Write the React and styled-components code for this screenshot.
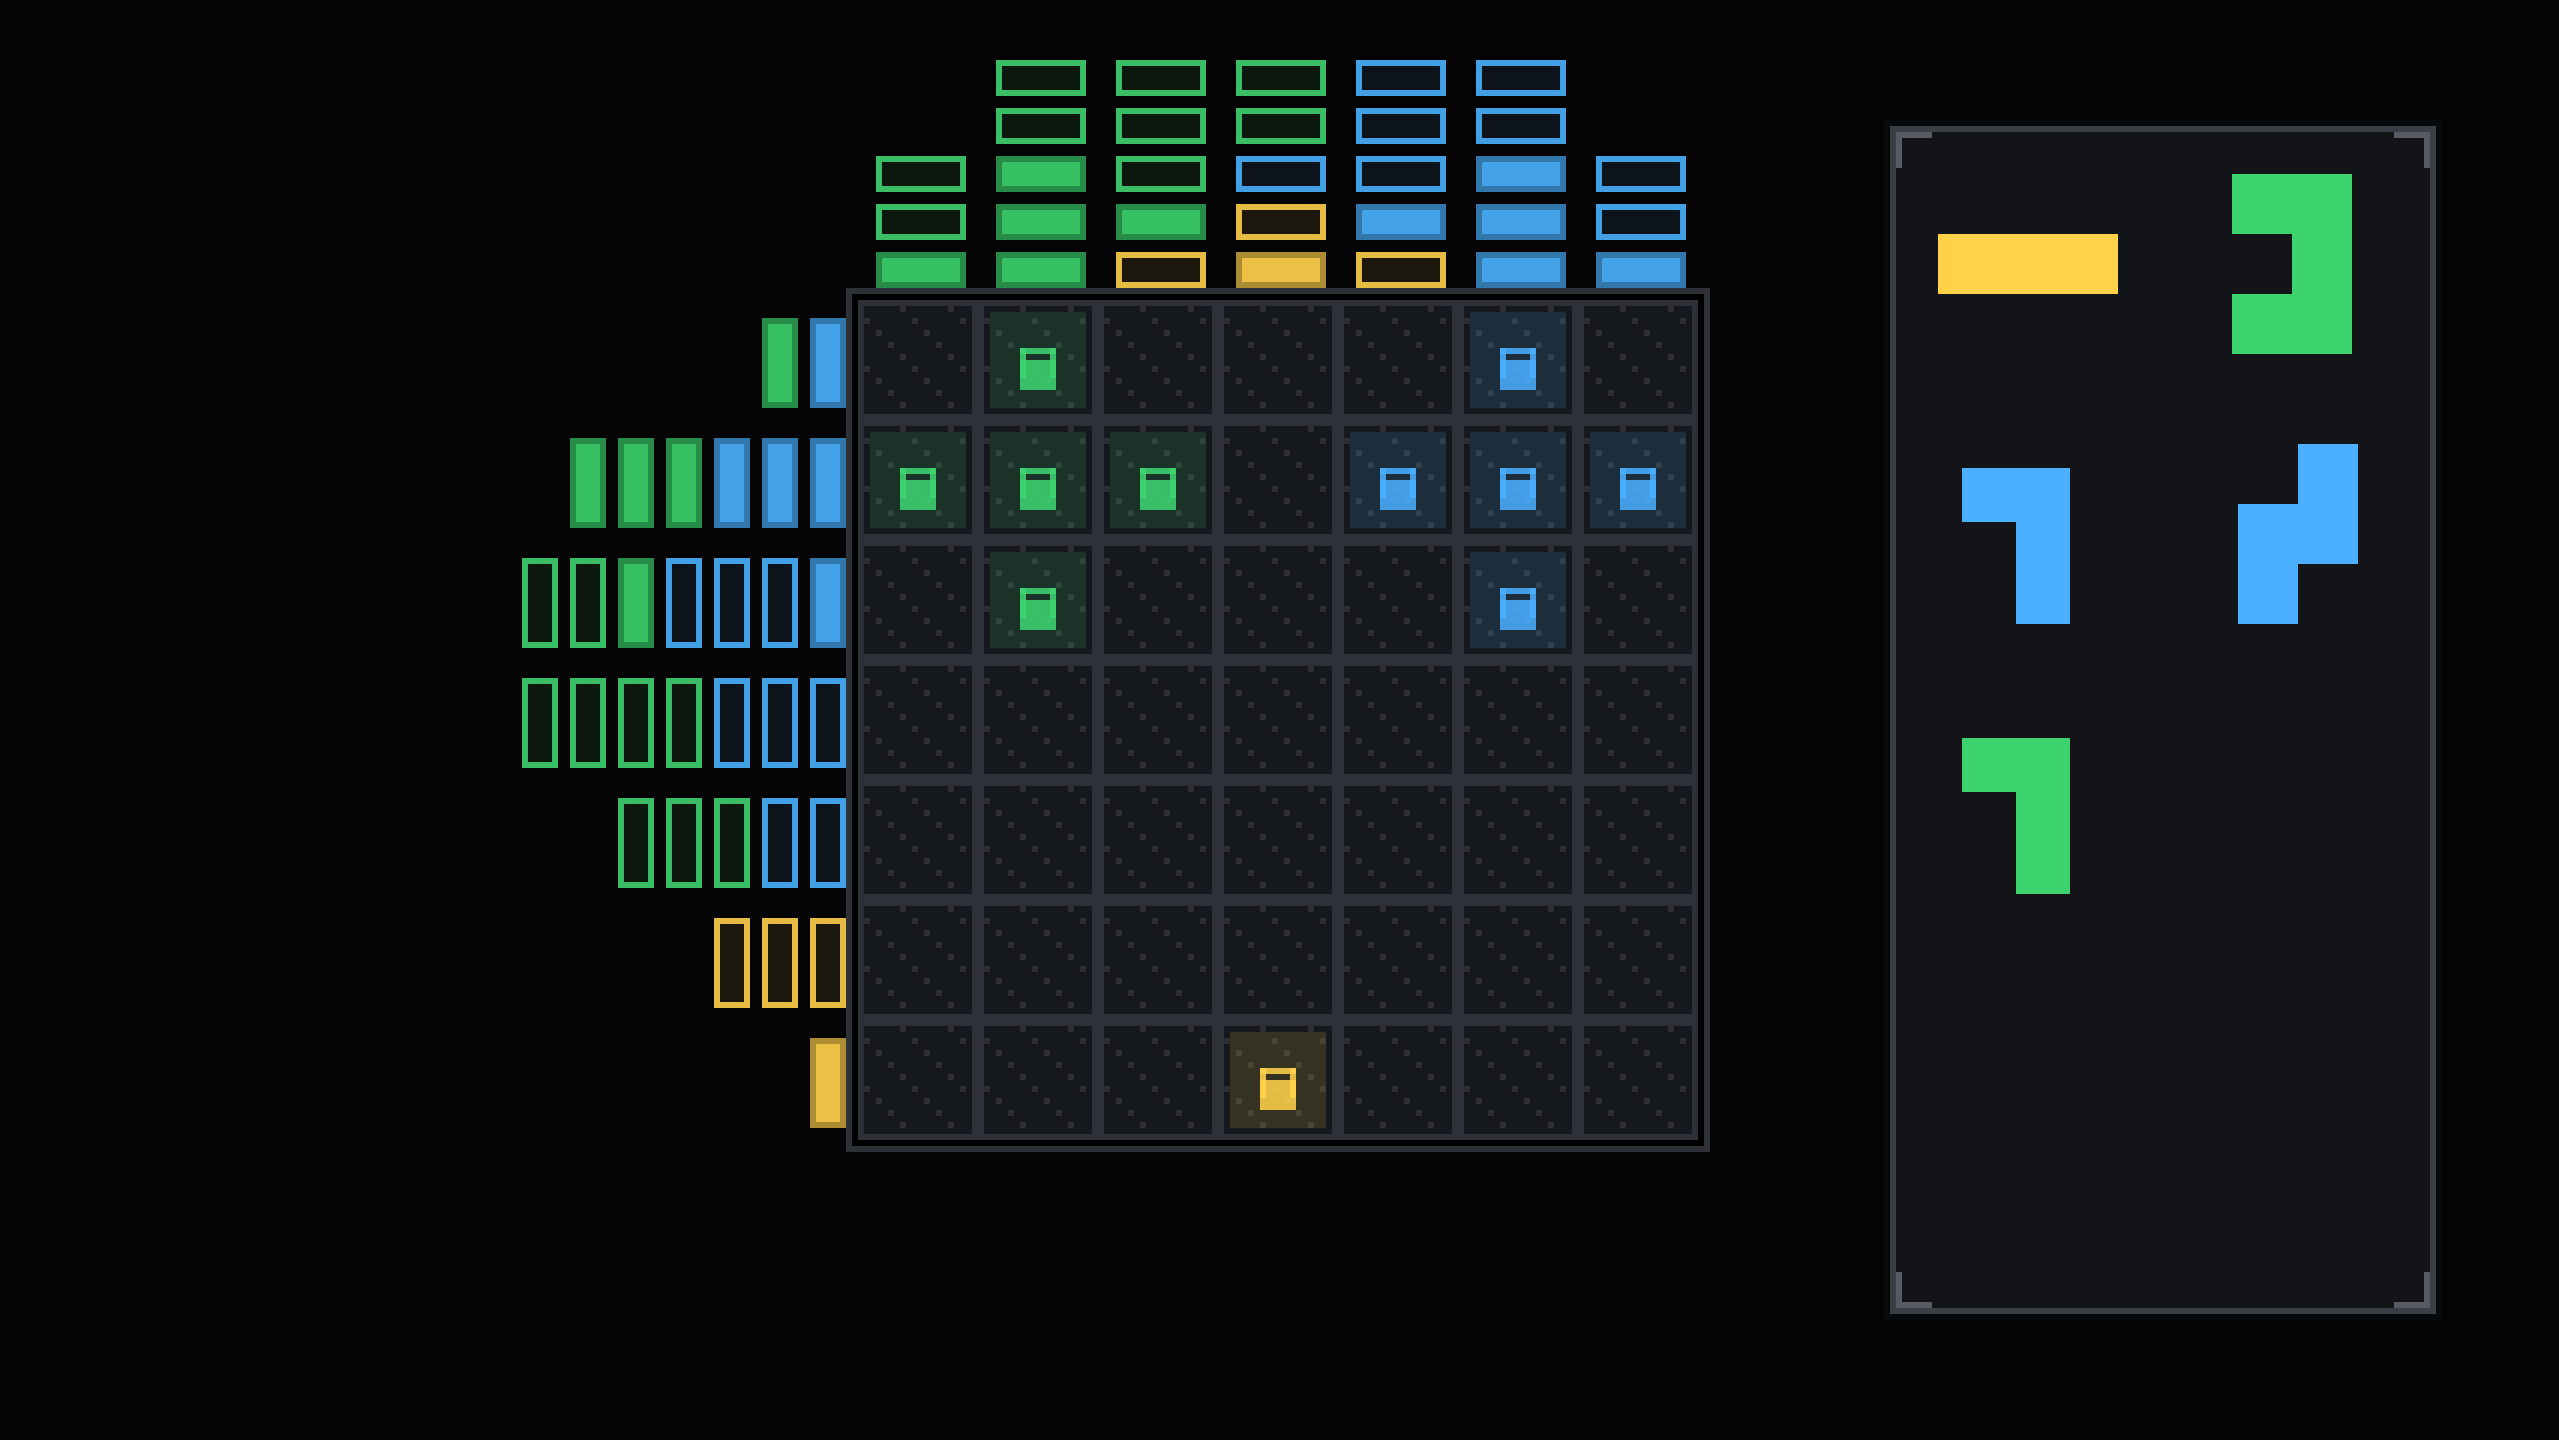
import React from 'react';
import styled, {createGlobalStyle} from 'styled-components';

// everything on the stage sits on a 6px "pixel"
const PX = 6;

const COLORS = {
    green: {
        base: '#3dd470',
        outline: '#39be65',
        hollow: '#0c180e',
        fill: '#36c264',
        edge: '#288c49',
        tint: 'rgba(61, 212, 112, .14)',
    },
    blue: {
        base: '#4ab0ff',
        outline: '#42a1e6',
        hollow: '#0c131a',
        fill: '#44a3e8',
        edge: '#3277ab',
        tint: 'rgba(74, 176, 255, .14)',
    },
    yellow: {
        base: '#ffd24a',
        outline: '#e5bb42',
        hollow: '#1c170d',
        fill: '#ebc044',
        edge: '#ac8d31',
        tint: 'rgba(255, 210, 74, .14)',
    },
};

const COLOR_KEYS = {g: 'green', b: 'blue', y: 'yellow'};

// lower case - still missing, upper case - already powered
const COLUMN_CLUES = ['ggG', 'ggGGG', 'gggGy', 'ggbyY', 'bbbBy', 'bbBBB', 'bbB'];
const ROW_CLUES = ['GB', 'GGGBBB', 'ggGbbbB', 'ggggbbb', 'gggbb', 'yyy', 'Y'];

const BOARD = [
    '.g...b.',
    'ggg.bbb',
    '.g...b.',
    '.......',
    '.......',
    '.......',
    '...y...',
];

// rects are [x, y, width, height] inside of a 40x40 preview
const PIECES = [
    {name: 'Yellow bar', color: 'yellow', rects: [[5, 15, 30, 10]]},
    {name: 'Green hook', color: 'green', rects: [[10, 5, 20, 10], [20, 15, 10, 10], [10, 25, 20, 10]]},
    {name: 'Blue corner', color: 'blue', rects: [[9, 8, 18, 9], [18, 17, 9, 17]]},
    {name: 'Blue step', color: 'blue', rects: [[21, 4, 10, 20], [11, 14, 10, 20]]},
    {name: 'Green corner', color: 'green', rects: [[9, 7, 18, 9], [18, 16, 9, 17]]},
];

const GlobalStyle = createGlobalStyle`
    * {
        box-sizing: border-box;
    }

    body {
        margin: 0;
        background: #040404;
        font-family: "Liberation Sans", sans-serif;
    }
`;

const Stage = styled.main`
    width: round(down, 100%, ${PX * 2}px);
    min-height: 100vh;
    padding: 60px 0;
    display: grid;
    grid-template-columns: 1fr auto 1fr;
    grid-template-rows: auto auto 1fr;
    grid-template-areas:
        ". columns tray"
        "rows board tray"
        ". . tray";
`;

const ColumnClues = styled.div`
    grid-area: columns;
    display: flex;
    align-items: flex-end;
    gap: 30px;
    padding-left: 30px;
`;

const ColumnClue = styled.div`
    width: 90px;
    display: flex;
    flex-direction: column;
    gap: 12px;
`;

const RowClues = styled.div`
    grid-area: rows;
    display: flex;
    flex-direction: column;
    gap: 30px;
    padding-top: 30px;
`;

const RowClue = styled.div`
    height: 90px;
    display: flex;
    justify-content: flex-end;
    gap: 12px;
`;

const Clue = styled.div`
    flex: 0 0 auto;
    border: ${PX}px solid ${props => props.$powered ? props.$color.edge : props.$color.outline};
    background: ${props => props.$powered ? props.$color.fill : props.$color.hollow};

    ${ColumnClue} & {
        height: 36px;
    }

    ${RowClue} & {
        width: 36px;
    }
`;

const Frame = styled.div`
    grid-area: board;
    border: ${PX}px solid #2e3138;
    padding: ${PX}px;
    background: #000;
`;

const Grid = styled.div`
    display: grid;
    grid-template-columns: repeat(7, 120px);
    grid-auto-rows: 120px;
`;

const dot = 'conic-gradient(at 6px 6px, transparent 75%, #2c2e33 0)';

const Cell = styled.div`
    border: ${PX}px solid #2e3138;
    padding: ${PX}px;
    background-color: #15181c;
    background-image: ${dot}, ${dot}, ${dot}, ${dot};
    background-size: 48px 48px;
    background-position: 36px 0, 0 12px, 12px 24px, 24px 36px;
`;

const Tile = styled.div`
    width: 96px;
    height: 96px;
    background: ${props => props.$color.tint};
`;

const Lock = styled.svg`
    display: block;
    width: 96px;
    height: 96px;
    fill: ${props => props.$color.base};
    fill-opacity: .87;
    shape-rendering: crispEdges;
`;

const Tray = styled.aside`
    grid-area: tray;
    justify-self: end;
    position: relative;
    margin: 66px 120px 66px 0;
    width: 546px;
    padding: 12px;
    border: ${PX}px solid #3a3e45;
    background: #131417;
    box-shadow: 0 0 0 ${PX}px #08090b;
`;

const Bracket = styled.span`
    position: absolute;
    ${props => props.$y}: 0;
    ${props => props.$x}: 0;
    width: 36px;
    height: 36px;
    border: 0 solid #575a62;
    border-${props => props.$y}-width: ${PX}px;
    border-${props => props.$x}-width: ${PX}px;
    pointer-events: none;
`;

const PieceList = styled.div`
    display: grid;
    grid-template-columns: repeat(2, 240px);
    gap: 36px 24px;
`;

const PieceButton = styled.button`
    height: 240px;
    padding: 0;
    border: 0;
    background: none;
    cursor: grab;
`;

const PieceShape = styled.svg`
    display: block;
    width: 100%;
    height: 100%;
    fill: ${props => props.$color.base};
    shape-rendering: crispEdges;
`;

function renderClues(clues) {
    return clues.split('').map((key, i) => (
        <Clue
            key={i}
            $color={COLORS[COLOR_KEYS[key.toLowerCase()]]}
            $powered={key !== key.toLowerCase()}
        />
    ));
}

function LockedTile({color}) {
    return (
        <Tile $color={color}>
            <Lock $color={color} viewBox="0 0 16 16" aria-hidden="true">
                <path d="M5 6h6v1H5z"/>
                <path d="M5 6h1v5H5zM10 6h1v5h-1z"/>
                <path d="M5 8h6v5H5z"/>
            </Lock>
        </Tile>
    );
}

function Piece({name, color, rects}) {
    return (
        <PieceButton type="button" aria-label={name}>
            <PieceShape $color={COLORS[color]} viewBox="0 0 40 40" aria-hidden="true">
                {rects.map(([x, y, width, height]) => (
                    <rect key={`${x}-${y}`} x={x} y={y} width={width} height={height}/>
                ))}
            </PieceShape>
        </PieceButton>
    );
}

function App() {
    return (
        <>
            <GlobalStyle/>
            <Stage>
                <ColumnClues>
                    {COLUMN_CLUES.map((clues, i) => <ColumnClue key={i}>{renderClues(clues)}</ColumnClue>)}
                </ColumnClues>
                <RowClues>
                    {ROW_CLUES.map((clues, i) => <RowClue key={i}>{renderClues(clues)}</RowClue>)}
                </RowClues>
                <Frame>
                    <Grid>
                        {BOARD.join('').split('').map((key, i) => (
                            <Cell key={i}>
                                {key !== '.' && <LockedTile color={COLORS[COLOR_KEYS[key]]}/>}
                            </Cell>
                        ))}
                    </Grid>
                </Frame>
                <Tray>
                    <Bracket $y="top" $x="left"/>
                    <Bracket $y="top" $x="right"/>
                    <Bracket $y="bottom" $x="left"/>
                    <Bracket $y="bottom" $x="right"/>
                    <PieceList>
                        {PIECES.map(piece => <Piece key={piece.name} {...piece}/>)}
                    </PieceList>
                </Tray>
            </Stage>
        </>
    );
}

export default App;
